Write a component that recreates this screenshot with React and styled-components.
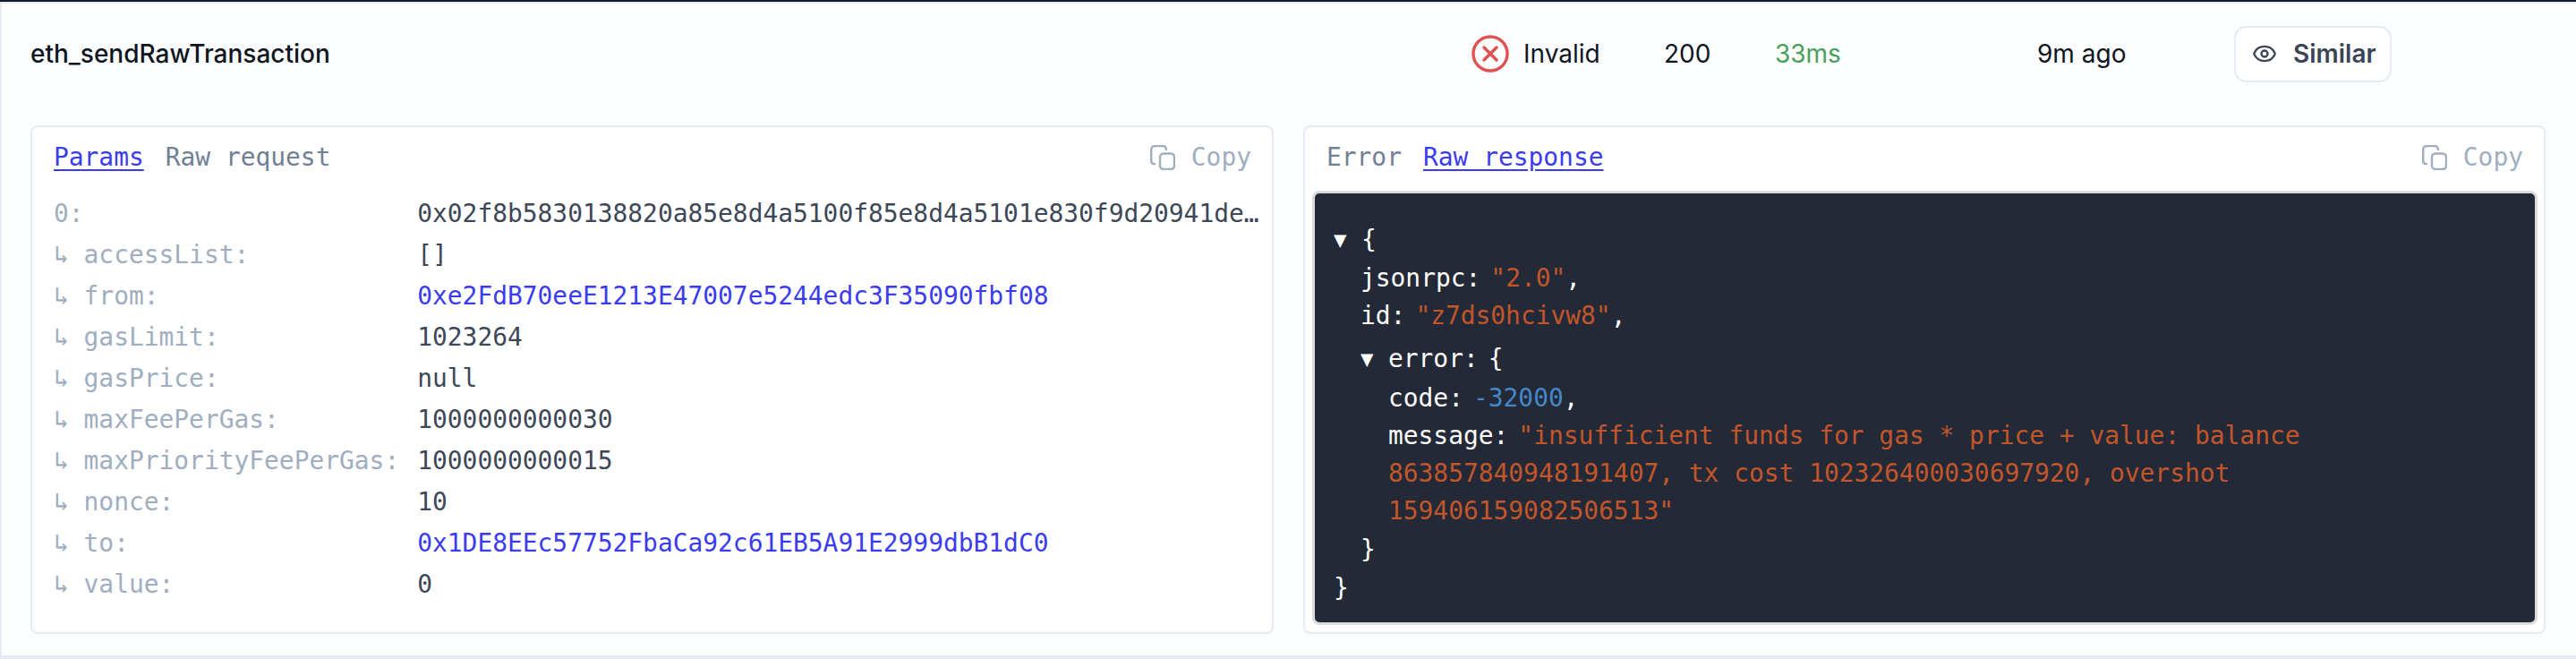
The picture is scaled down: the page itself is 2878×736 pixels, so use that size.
import React from 'react';
import styled, { createGlobalStyle } from 'styled-components';
import { Eye } from 'lucide-react';

const mono = '"DejaVu Sans Mono", "Liberation Mono", monospace';

const GlobalStyle = createGlobalStyle`
  html, body {
    margin: 0;
    padding: 0;
    background: #fcfdff;
  }
  * {
    box-sizing: border-box;
  }
`;

const Page = styled.div`
  width: 2878px;
  height: 736px;
  border-top: 2px solid #141b2d;
`;

const Row = styled.div`
  height: 734px;
  background: #fcfdff;
  border-top: 2px solid #e8ecf3;
  border-left: 2px solid #e6eaf1;
  border-bottom: 4px solid #e6eaf1;
  padding: 0 33px 24px 32px;
`;

const Summary = styled.div`
  height: 112px;
  margin-bottom: 24px;
  display: grid;
  grid-template-columns: 1610px 215px 124px 293px 220px auto;
  align-items: center;
  font-family: Inter, sans-serif;
  font-size: 28px;
  color: #0f1521;
`;

const Method = styled.div`
  font-weight: 500;
`;

const Status = styled.div`
  display: flex;
  align-items: center;
  gap: 16px;
`;

const Duration = styled.div`
  color: #48a05a;
`;

const SimilarButton = styled.button`
  width: 176px;
  height: 63px;
  display: flex;
  align-items: center;
  gap: 18px;
  padding: 0 0 0 18px;
  background: #fff;
  border: 2px solid #e6eaf1;
  border-radius: 14px;
  font-family: Inter, sans-serif;
  font-size: 28px;
  font-weight: 600;
  color: #3b4454;
`;

const Panels = styled.div`
  display: grid;
  grid-template-columns: 1389px 1388px;
  gap: 33px;
`;

const Panel = styled.div`
  height: 568px;
  display: flex;
  flex-direction: column;
  background: #fff;
  border: 2px solid #e6eaf1;
  border-radius: 8px;
  font-family: ${mono};
  font-size: 27.9px;
  line-height: 42px;
`;

const PanelHeader = styled.div`
  display: flex;
  align-items: center;
  gap: 24px;
  padding: 13px 23px 16px 24px;
`;

const Tab = styled.span`
  color: ${props => (props.$active ? '#3b3bf0' : '#718096')};
  text-decoration: ${props => (props.$active ? 'underline' : 'none')};
  text-underline-offset: 4px;
`;

const CopyButton = styled.span`
  margin-left: auto;
  display: flex;
  align-items: center;
  gap: 18px;
  color: #a0aec0;
`;

const ParamGrid = styled.div`
  display: grid;
  grid-template-columns: max-content 1fr;
  column-gap: 20px;
  padding: 3px 4px 0 24px;
  line-height: 46px;
`;

const ParamKey = styled.div`
  color: #a0aec0;
  white-space: pre;
`;

const ParamValue = styled.div`
  color: ${props => (props.$link ? '#3b3bf0' : '#3d4757')};
  white-space: nowrap;
`;

const CodeBlock = styled.div`
  flex: 1;
  margin: 0 7px 8px 8px;
  padding: 31px 0 0 21px;
  background: #232936;
  border: 3px solid #dcdcdc;
  border-radius: 8px;
  color: #fff;
`;

const JsonLine = styled.div`
  display: flex;
  gap: 11px;
  height: 42px;
  margin-top: ${props => props.$top || 0}px;
  padding-left: ${props => props.$indent || 0}px;
  white-space: pre;
`;

const Caret = styled.span`
  font-size: 24px;
  width: 20px;
`;

const JsonString = styled.span`
  color: #c2562b;
`;

const JsonNumber = styled.span`
  color: #4388c9;
`;

const Comma = styled.span`
  margin-left: -11px;
`;

const params = [
  { key: '0:', value: '0x02f8b5830138820a85e8d4a5100f85e8d4a5101e830f9d20941de…' },
  { key: '↳ accessList:', value: '[]' },
  { key: '↳ from:', value: '0xe2FdB70eeE1213E47007e5244edc3F35090fbf08', link: true },
  { key: '↳ gasLimit:', value: '1023264' },
  { key: '↳ gasPrice:', value: 'null' },
  { key: '↳ maxFeePerGas:', value: '1000000000030' },
  { key: '↳ maxPriorityFeePerGas:', value: '1000000000015' },
  { key: '↳ nonce:', value: '10' },
  { key: '↳ to:', value: '0x1DE8EEc57752FbaCa92c61EB5A91E2999dbB1dC0', link: true },
  { key: '↳ value:', value: '0' },
];

function InvalidIcon() {
  return (
    <svg width="42" height="42" viewBox="0 0 42 42" fill="none" stroke="#e0524f" strokeWidth="3.4" strokeLinecap="round">
      <circle cx="21" cy="21" r="19" />
      <path d="M14 14 L28 28 M28 14 L14 28" />
    </svg>
  );
}

function CopyIcon() {
  return (
    <svg width="28" height="28" viewBox="0 0 28 28" fill="none" stroke="#a0aec0" strokeWidth="2.4" strokeLinecap="round">
      <rect x="11" y="9.5" width="16" height="17.5" rx="4" />
      <path d="M1.2 18 V5 A4 4 0 0 1 5.2 1 H14 A4 4 0 0 1 18 5" />
      <path d="M1.2 18 A3 3 0 0 0 5 21" />
    </svg>
  );
}

function Copy() {
  return (
    <CopyButton>
      <CopyIcon />
      Copy
    </CopyButton>
  );
}

export default function App() {
  return (
    <Page>
      <GlobalStyle />
      <Row>
        <Summary>
          <Method>eth_sendRawTransaction</Method>
          <Status>
            <InvalidIcon />
            Invalid
          </Status>
          <div>200</div>
          <Duration>33ms</Duration>
          <div>9m ago</div>
          <SimilarButton>
            <Eye size={28} strokeWidth={2} />
            Similar
          </SimilarButton>
        </Summary>
        <Panels>
          <Panel>
            <PanelHeader>
              <Tab $active>Params</Tab>
              <Tab>Raw request</Tab>
              <Copy />
            </PanelHeader>
            <ParamGrid>
              {params.map(param => (
                <React.Fragment key={param.key}>
                  <ParamKey>{param.key}</ParamKey>
                  <ParamValue $link={param.link}>{param.value}</ParamValue>
                </React.Fragment>
              ))}
            </ParamGrid>
          </Panel>
          <Panel>
            <PanelHeader>
              <Tab>Error</Tab>
              <Tab $active>Raw response</Tab>
              <Copy />
            </PanelHeader>
            <CodeBlock>
              <JsonLine><Caret>▼</Caret><span>{'{'}</span></JsonLine>
              <JsonLine $indent={30} $top={1}>jsonrpc:<JsonString>"2.0"</JsonString><Comma>,</Comma></JsonLine>
              <JsonLine $indent={30}>id:<JsonString>"z7ds0hcivw8"</JsonString><Comma>,</Comma></JsonLine>
              <JsonLine $indent={30} $top={6}><Caret>▼</Caret><span>error:</span><span>{'{'}</span></JsonLine>
              <JsonLine $indent={61} $top={2}>code:<JsonNumber>-32000</JsonNumber><Comma>,</Comma></JsonLine>
              <JsonLine $indent={61}>message:<JsonString>"insufficient funds for gas * price + value: balance</JsonString></JsonLine>
              <JsonLine $indent={61}><JsonString>863857840948191407, tx cost 102326400030697920, overshot</JsonString></JsonLine>
              <JsonLine $indent={61}><JsonString>159406159082506513"</JsonString></JsonLine>
              <JsonLine $indent={30} $top={1}>{'}'}</JsonLine>
              <JsonLine $top={1}>{'}'}</JsonLine>
            </CodeBlock>
          </Panel>
        </Panels>
      </Row>
    </Page>
  );
}
